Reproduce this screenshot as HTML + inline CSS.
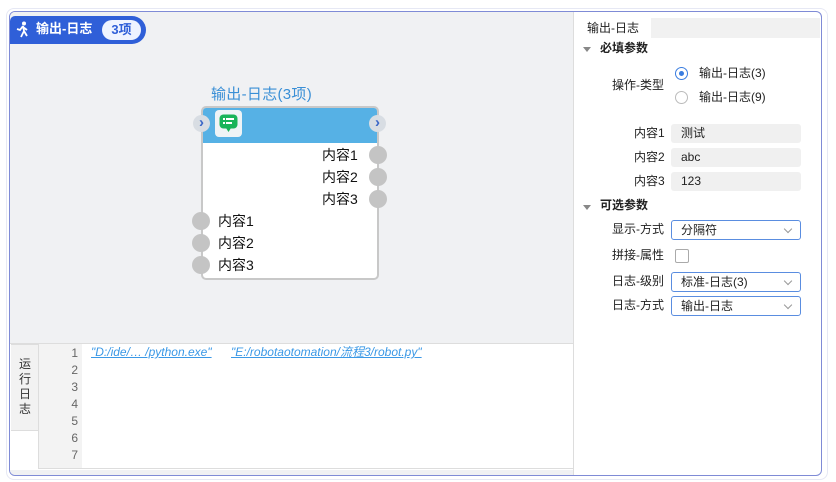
<!DOCTYPE html><html><head><meta charset="utf-8"><style>
*{margin:0;padding:0;box-sizing:border-box}
body{width:836px;height:482px;background:#fff;font-family:"Liberation Sans","Noto Sans CJK SC",sans-serif;position:relative;overflow:hidden;font-size:12px;color:#222;line-height:1.15}
.a{position:absolute}
.port{position:absolute;width:18px;height:18px;border-radius:50%;background:#c4c4c4}
.lbl{position:absolute;font-size:14px;color:#111}
.rl{position:absolute;font-size:12px;color:#222;text-align:right}
.inp{position:absolute;left:671px;width:130px;height:19px;background:#f0f0f0;border-radius:3px;padding-left:10px;line-height:19px;font-size:12px}
.sel{position:absolute;left:671px;width:130px;height:20px;border:1px solid #5a8de0;border-radius:3px;padding-left:9px;line-height:18px;font-size:12px}
.sel:after{content:"";position:absolute;right:9px;top:5px;width:5px;height:5px;border-right:1px solid #999;border-bottom:1px solid #999;transform:rotate(45deg)}
.tri{position:absolute;width:0;height:0;border-left:4px solid transparent;border-right:4px solid transparent;border-top:5px solid #888}
</style></head><body>
<div class="a" style="left:6px;top:8px;width:822px;height:472px;border:1px solid #e6e8f4;border-radius:8px"></div>
<div class="a" style="left:9px;top:11px;width:813px;height:465px;border:1px solid #7f8bd6;border-radius:6px;overflow:hidden;background:#fff">
 <div class="a" style="left:0;top:0;width:563px;height:465px;background:#f0f1f3"></div>
 <div class="a" style="left:563px;top:0;width:1px;height:465px;background:#ddd"></div>
</div>
<div class="a" style="left:10px;top:16px;width:136px;height:28px;background:#2f5fd8;border-radius:0 14px 14px 0;border-top-left-radius:5px"></div>
<svg class="a" style="left:15px;top:21px" width="16" height="18" viewBox="0 0 16 18"><circle cx="9" cy="2.5" r="2" fill="#fff"/><path d="M8 5 L5 9 L2 8 M8 5 L9 10 L6 16 M9 10 L12 15 M8 6 L12 9" stroke="#fff" stroke-width="1.8" fill="none"/></svg>
<div class="a" style="left:36px;top:22px;color:#fff;font-weight:bold;font-size:13px">输出-日志</div>
<div class="a" style="left:102px;top:20px;width:39px;height:20px;background:#eef3ff;border-radius:10px;color:#2f5fd8;font-weight:bold;font-size:13px;text-align:center;line-height:20px">3项</div>
<div class="a" style="left:211px;top:86px;color:#3a8fd6;font-size:15px;letter-spacing:0.3px">输出-日志(3项)</div>
<div class="a" style="left:201px;top:106px;width:178px;height:174px;background:#fff;border:2px solid #c8c8c8;border-radius:5px;overflow:hidden">
 <div class="a" style="left:0;top:0;width:178px;height:35px;background:#56b1e5"></div>
</div>
<div class="a" style="left:215px;top:110px;width:27px;height:27px;background:#eef3f6;border-radius:4px"></div>
<svg class="a" style="left:219px;top:114px" width="19" height="20" viewBox="0 0 19 20"><rect x="0.5" y="0.5" width="18" height="14" rx="4" fill="#19b45a"/><path d="M7 14 L9.5 18 L12 14Z" fill="#19b45a"/><g fill="#fff"><rect x="4" y="4" width="2" height="2"/><rect x="7" y="4" width="8" height="2"/><rect x="4" y="8" width="2" height="2"/><rect x="7" y="8" width="6" height="2"/></g></svg>
<div class="a" style="left:193px;top:115px;width:17px;height:17px;border-radius:50%;background:#d8dde3;color:#3a66c7;font-weight:bold;font-size:15px;line-height:16px;text-align:center">›</div>
<div class="a" style="left:369px;top:115px;width:17px;height:17px;border-radius:50%;background:#d8dde3;color:#3a66c7;font-weight:bold;font-size:15px;line-height:16px;text-align:center">›</div>
<div class="lbl" style="left:322px;top:147px">内容1</div>
<div class="lbl" style="left:322px;top:169px">内容2</div>
<div class="lbl" style="left:322px;top:191px">内容3</div>
<div class="port" style="left:369px;top:146px"></div><div class="port" style="left:369px;top:168px"></div><div class="port" style="left:369px;top:190px"></div>
<div class="lbl" style="left:218px;top:213px">内容1</div>
<div class="lbl" style="left:218px;top:235px">内容2</div>
<div class="lbl" style="left:218px;top:257px">内容3</div>
<div class="port" style="left:192px;top:212px"></div><div class="port" style="left:192px;top:234px"></div><div class="port" style="left:192px;top:256px"></div>
<div class="a" style="left:10px;top:343px;width:563px;height:127px;background:#fff;border-top:1px solid #ddd"></div>
<div class="a" style="left:11px;top:344px;width:28px;height:87px;background:#f2f2f2;border:1px solid #ddd;border-left:none"></div>
<div class="a" style="left:19px;top:357px;font-size:12px;line-height:15px;width:12px;color:#333">运行日志</div>
<div class="a" style="left:38px;top:344px;width:1px;height:125px;background:#ddd"></div>
<div class="a" style="left:39px;top:344px;width:43px;height:125px;background:#f3f3f3"></div>
<div class="a" style="left:39px;top:345px;width:39px;text-align:right;font-size:12px;line-height:17px;color:#666">1<br>2<br>3<br>4<br>5<br>6<br>7</div>
<div class="a" style="left:38px;top:468px;width:535px;height:1px;background:#ddd"></div>
<div class="a" style="left:91px;top:346px;font-size:12px;font-style:italic;color:#3a98e6;text-decoration:underline">"D:/ide/… /python.exe"</div>
<div class="a" style="left:231px;top:346px;font-size:12px;font-style:italic;color:#3a98e6;text-decoration:underline">"E:/robotaotomation/流程3/robot.py"</div>
<div class="a" style="left:574px;top:18px;width:246px;height:20px;background:#f1f1f1"></div>
<div class="a" style="left:574px;top:18px;width:77px;height:20px;background:#fff;font-size:12px;line-height:20px;padding-left:13px">输出-日志</div>
<div class="tri" style="left:583px;top:47px"></div>
<div class="a" style="left:600px;top:42px;font-weight:bold;font-size:12px">必填参数</div>
<div class="rl" style="left:612px;top:79px">操作-类型</div>
<div class="a" style="left:675px;top:67px;width:13px;height:13px;border-radius:50%;border:1px solid #3a7de0;background:#fff"></div>
<div class="a" style="left:679px;top:71px;width:5px;height:5px;border-radius:50%;background:#3a7de0"></div>
<div class="a" style="left:699px;top:67px">输出-日志(3)</div>
<div class="a" style="left:675px;top:91px;width:13px;height:13px;border-radius:50%;border:1px solid #bbb;background:#fff"></div>
<div class="a" style="left:699px;top:91px">输出-日志(9)</div>
<div class="rl" style="left:634px;top:127px">内容1</div><div class="inp" style="top:124px">测试</div>
<div class="rl" style="left:634px;top:151px">内容2</div><div class="inp" style="top:148px">abc</div>
<div class="rl" style="left:634px;top:175px">内容3</div><div class="inp" style="top:172px">123</div>
<div class="tri" style="left:583px;top:205px"></div>
<div class="a" style="left:600px;top:199px;font-weight:bold;font-size:12px">可选参数</div>
<div class="rl" style="left:612px;top:223px">显示-方式</div><div class="sel" style="top:220px">分隔符</div>
<div class="rl" style="left:612px;top:249px">拼接-属性</div>
<div class="a" style="left:675px;top:249px;width:14px;height:14px;border:1px solid #aaa;border-radius:2px;background:#fff"></div>
<div class="rl" style="left:612px;top:275px">日志-级别</div><div class="sel" style="top:272px">标准-日志(3)</div>
<div class="rl" style="left:612px;top:299px">日志-方式</div><div class="sel" style="top:296px">输出-日志</div>
</body></html>
